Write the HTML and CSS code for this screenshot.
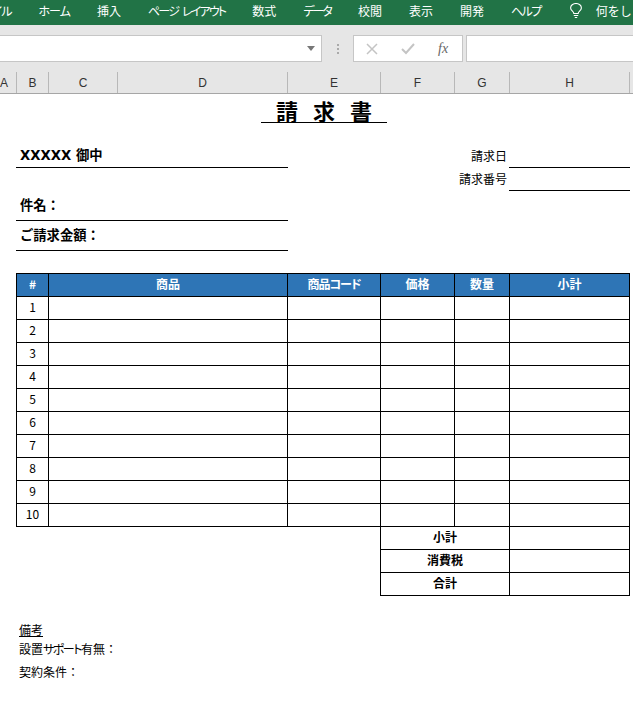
FILE: index.html
```html
<!DOCTYPE html>
<html lang="ja">
<head>
    <meta charset="UTF-8">
    <meta name="viewport" content="width=device-width, initial-scale=1.0">
    <title>請求書</title>
    <link rel="stylesheet" href="styles.css">
</head>
<body>
    <div class="ribbon">
        <span class="tab tab-file narrow">ファイル</span>
        <span class="tab narrow">ホーム</span>
        <span class="tab">挿入</span>
        <span class="tab tab-layout">ページ レイアウト</span>
        <span class="tab">数式</span>
        <span class="tab narrowest">データ</span>
        <span class="tab">校閲</span>
        <span class="tab">表示</span>
        <span class="tab">開発</span>
        <span class="tab narrower">ヘルプ</span>
        <svg class="bulb" width="12" height="15" viewBox="0 0 12 15" fill="none" stroke="#fff" stroke-width="1.100">
            <path d="M3.800 10.500c0-1.800-3.200-3-3.200-5.600a5.400 4.400 0 0 1 10.800 0c0 2.600-3.200 3.800-3.200 5.600z"/>
            <path d="M3.800 12.500h4.400M4.800 14.500h2.400"/>
        </svg>
        <span class="tab tab-search">何をしますか</span>
    </div>

    <div class="formula-bar">
        <div class="name-box">
            <svg width="8" height="5" viewBox="0 0 8 5"><path d="M0 0h8L4 5z" fill="#777"/></svg>
        </div>
        <div class="grip"><i></i><i></i><i></i></div>
        <div class="formula-buttons">
            <svg width="12" height="12" viewBox="0 0 12 12" fill="none" stroke="#c4c4c4" stroke-width="1.500"><path d="M1 1l10 10M11 1L1 11"/></svg>
            <svg width="14" height="12" viewBox="0 0 14 12" fill="none" stroke="#c4c4c4" stroke-width="2"><path d="M1 6l4 4 8-9"/></svg>
            <span class="fx">fx</span>
        </div>
        <div class="formula-input"></div>
    </div>

    <div class="col-headers">
        <div class="col-a">A</div>
        <div class="col-b">B</div>
        <div class="col-c">C</div>
        <div class="col-d">D</div>
        <div class="col-e">E</div>
        <div class="col-f">F</div>
        <div class="col-g">G</div>
        <div class="col-h">H</div>
    </div>

    <div class="sheet">
        <div class="title">請 求 書</div>

        <div class="info">
            <div class="info-left">
                <div class="line line-to">XXXXX 御中</div>
                <div class="line line-subject">件名：</div>
                <div class="line line-amount">ご請求金額：</div>
            </div>
            <div class="info-right">
                <div class="meta"><span class="meta-label">請求日</span><span class="meta-value"></span></div>
                <div class="meta"><span class="meta-label">請求番号</span><span class="meta-value"></span></div>
            </div>
        </div>

        <table class="items">
            <colgroup>
                <col class="w-no"><col class="w-name"><col class="w-code"><col class="w-price"><col class="w-qty"><col class="w-sub">
            </colgroup>
            <thead>
                <tr><th>#</th><th>商品</th><th class="th-code">商品コード</th><th>価格</th><th>数量</th><th>小計</th></tr>
            </thead>
            <tbody>
                <tr><td>1</td><td></td><td></td><td></td><td></td><td></td></tr>
                <tr><td>2</td><td></td><td></td><td></td><td></td><td></td></tr>
                <tr><td>3</td><td></td><td></td><td></td><td></td><td></td></tr>
                <tr><td>4</td><td></td><td></td><td></td><td></td><td></td></tr>
                <tr><td>5</td><td></td><td></td><td></td><td></td><td></td></tr>
                <tr><td>6</td><td></td><td></td><td></td><td></td><td></td></tr>
                <tr><td>7</td><td></td><td></td><td></td><td></td><td></td></tr>
                <tr><td>8</td><td></td><td></td><td></td><td></td><td></td></tr>
                <tr><td>9</td><td></td><td></td><td></td><td></td><td></td></tr>
                <tr><td>10</td><td></td><td></td><td></td><td></td><td></td></tr>
                <tr><td class="blank" colspan="3"></td><td class="total" colspan="2">小計</td><td></td></tr>
                <tr><td class="blank" colspan="3"></td><td class="total" colspan="2">消費税</td><td></td></tr>
                <tr><td class="blank" colspan="3"></td><td class="total" colspan="2">合計</td><td></td></tr>
            </tbody>
        </table>

        <div class="notes">
            <div class="notes-title">備考</div>
            <div class="note">設置<span class="kana">サポート</span>有無：</div>
            <div class="note">契約条件：</div>
        </div>
    </div>
</body>
</html>
```

FILE: styles.css
```css
* {
    box-sizing: border-box;
}

body {
    margin: 0;
    height: 709px;
    overflow: hidden;
    background-color: #fff;
    color: #000;
    font-family: "Noto Sans CJK JP", "Noto Sans", sans-serif;
    font-size: 12px;
}

/* ribbon */
.ribbon {
    display: flex;
    align-items: center;
    gap: 27px;
    height: 25px;
    padding-bottom: 4px;
    overflow: hidden;
    background-color: #217346;
    color: #fff;
    white-space: nowrap;
}

.tab {
    flex: none;
    font-size: 12px;
    font-feature-settings: "palt";
    line-height: 18px;
}

.narrow { letter-spacing: -1px; }
.narrower { letter-spacing: -1.500px; }
.narrowest { letter-spacing: -2px; }

.tab-file {
    margin-left: -26px;
}

.tab-layout {
    letter-spacing: -1.800px;
    word-spacing: 3px;
}

.tab-search {
    margin-left: -13px;
    font-feature-settings: normal;
}

.bulb {
    flex: none;
    margin-left: 2px;
}

/* formula bar */
.formula-bar {
    display: flex;
    align-items: center;
    height: 47px;
    background-color: #e6e6e6;
}

.name-box {
    display: flex;
    align-items: center;
    justify-content: flex-end;
    flex: none;
    width: 323px;
    height: 27px;
    margin-left: -1px;
    padding-right: 6px;
    border: 1px solid #c6c6c6;
    background-color: #fff;
}

.grip {
    display: flex;
    flex-direction: column;
    flex: none;
    gap: 2px;
    width: 31px;
    align-items: center;
}

.grip i {
    width: 2px;
    height: 2px;
    background-color: #aaa;
}

.formula-buttons {
    display: flex;
    align-items: center;
    flex: none;
    gap: 23px;
    width: 110px;
    height: 27px;
    padding-left: 12px;
    border: 1px solid #c6c6c6;
    background-color: #fff;
}

.fx {
    color: #666;
    font-family: "Liberation Serif", serif;
    font-size: 14px;
    font-style: italic;
}

.formula-input {
    flex: none;
    width: 200px;
    height: 27px;
    margin-left: 3px;
    border: 1px solid #c6c6c6;
    background-color: #fff;
}

/* column headers */
.col-headers {
    display: flex;
    height: 22px;
    border-bottom: 1px solid #a6a6a6;
    background-color: #e6e6e6;
    color: #333;
    font-family: "Liberation Sans", sans-serif;
    font-size: 12px;
    line-height: 22px;
    text-align: center;
}

.col-headers div {
    flex: none;
    height: 21px;
    border-right: 1px solid #b8b8b8;
}

.col-a { width: 25px; margin-left: -8px; }
.col-b { width: 32px; }
.col-c { width: 69px; }
.col-d { width: 170px; }
.col-e { width: 93px; }
.col-f { width: 74px; }
.col-g { width: 55px; }
.col-h { width: 120px; }

/* sheet */
.title {
    width: 126px;
    height: 29px;
    margin-left: 261px;
    border-bottom: 1px solid #000;
    font-size: 22px;
    font-weight: 700;
    line-height: 32px;
    text-align: center;
    word-spacing: 10px;
}

.info {
    display: flex;
    justify-content: space-between;
    width: 614px;
    height: 150px;
    margin-left: 16px;
}

.info-left {
    width: 272px;
}

.line {
    padding-left: 4px;
    border-bottom: 1px solid #000;
    font-size: 13.300px;
    font-weight: 700;
    line-height: 22px;
}

.line-to {
    height: 45px;
    padding-top: 22px;
    font-family: "DejaVu Sans", "Noto Sans CJK JP", sans-serif;
}

.line-subject {
    height: 53px;
    padding-top: 26px;
}

.line-amount {
    height: 30px;
    padding-top: 3px;
}

.info-right {
    padding-top: 22px;
}

.meta {
    display: flex;
    height: 23px;
    line-height: 21px;
}

.meta-label {
    width: 102px;
    padding-right: 2px;
    text-align: right;
}

.meta-value {
    width: 121px;
    border-bottom: 1px solid #000;
}

.items {
    width: 613px;
    margin-left: 16px;
    border-collapse: collapse;
    table-layout: fixed;
}

.w-no { width: 32px; }
.w-name { width: 239px; }
.w-code { width: 93px; }
.w-price { width: 74px; }
.w-qty { width: 55px; }
.w-sub { width: 120px; }

.items th,
.items td {
    height: 23px;
    padding: 0 0 2px;
    border: 1px solid #000;
    font-size: 12px;
    line-height: 20px;
    text-align: center;
}

.items th {
    background-color: #2e75b6;
    color: #fff;
    font-weight: 700;
}

.items .th-code {
    font-feature-settings: "palt";
    letter-spacing: -1px;
}

.items .total {
    font-weight: 700;
}

.items .blank {
    border: none;
}

.notes {
    margin: 25px 0 0 19px;
}

.notes-title {
    height: 17px;
    line-height: 18px;
    text-decoration: underline;
}

.note {
    height: 23px;
    line-height: 22px;
}

.kana {
    font-feature-settings: "palt";
    letter-spacing: -1.500px;
}
```
